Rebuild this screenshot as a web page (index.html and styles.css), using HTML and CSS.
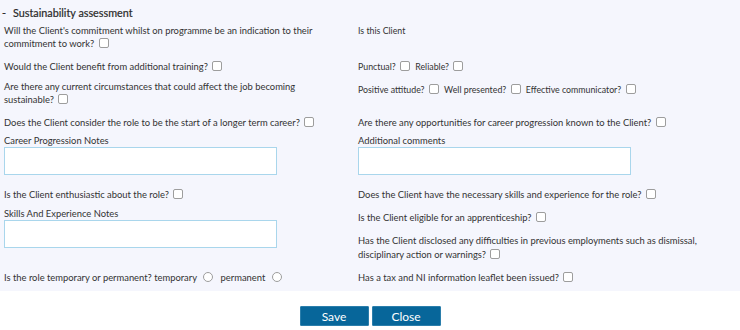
FILE: index.html
```html
<!DOCTYPE html>
<html lang="en">
<head>
  <meta charset="UTF-8">
  <title>Sustainability assessment</title>
  <link rel="stylesheet" href="styles.css">
</head>
<body>
  <div class="panel">
    <div class="legend"><span class="dash">-</span>Sustainability assessment</div>
    <div class="grid">
      <div class="cell">Will the Client's commitment whilst on programme be an indication to their commitment to work? <input type="checkbox"></div>
      <div class="cell small">Is this Client</div>

      <div class="cell">Would the Client benefit from additional training? <input type="checkbox"></div>
      <div class="cell small">Punctual? <input type="checkbox"> <span class="opt">Reliable?</span> <input type="checkbox"></div>

      <div class="cell">Are there any current circumstances that could affect the job becoming sustainable? <input type="checkbox"></div>
      <div class="cell small push">Positive attitude? <input type="checkbox"> <span class="opt">Well presented?</span> <input type="checkbox"> <span class="opt">Effective communicator?</span> <input type="checkbox"></div>

      <div class="cell">Does the Client consider the role to be the start of a longer term career? <input type="checkbox"></div>
      <div class="cell">Are there any opportunities for career progression known to the Client? <input type="checkbox"></div>

      <div class="cell">
        <label class="lbl">Career Progression Notes</label>
        <textarea></textarea>
      </div>
      <div class="cell">
        <label class="lbl">Additional comments</label>
        <textarea></textarea>
      </div>

      <div class="cell">Is the Client enthusiastic about the role? <input type="checkbox"></div>
      <div class="cell">Does the Client have the necessary skills and experience for the role? <input type="checkbox"></div>

      <div class="cell">
        <label class="lbl">Skills And Experience Notes</label>
        <textarea></textarea>
      </div>
      <div class="cell stack">
        <div>Is the Client eligible for an apprenticeship? <input type="checkbox"></div>
        <div>Has the Client disclosed any difficulties in previous employments such as dismissal, disciplinary action or warnings? <input type="checkbox"></div>
      </div>

      <div class="cell">Is the role temporary or permanent? temporary <input type="radio" name="role"> <span class="opt">permanent</span> <input type="radio" name="role"></div>
      <div class="cell">Has a tax and NI information leaflet been issued? <input type="checkbox"></div>
    </div>
  </div>
  <div class="actions">
    <button class="btn">Save</button>
    <button class="btn">Close</button>
  </div>
</body>
</html>
```

FILE: styles.css
```css
*{
  margin:0;
  padding:0;
  box-sizing:border-box;
}
body{
  font-family:Lato, "Open Sans", sans-serif;
  font-size:9.4px;
  color:#333;
  background:#fff;
}
.panel{
  background:#f5f6fd;
  padding:6px 0 0 0;
  height:291px;
}
.legend{
  font-size:10.8px;
  line-height:13px;
  color:#2a2a2a;
  -webkit-text-stroke:0.2px #2a2a2a;
  padding-left:2px;
}
.dash{
  margin-right:7px;
}
.grid{
  display:grid;
  grid-template-columns:354px 1fr;
  grid-template-rows:36px 20px 36px 18px 54px 19px 64px 20px;
  margin-top:5px;
  padding-left:4px;
}
.cell{
  line-height:13px;
  padding-right:12px;
}
.cell.small{
  font-size:8.8px;
}
.cell.push{
  padding-top:3px;
}
.opt{
  margin-left:3px;
}
.stack{
  display:flex;
  flex-direction:column;
  gap:9px;
  padding-top:4px;
  padding-right:4px;
  line-height:14px;
}
.lbl{
  display:block;
}
textarea{
  display:block;
  width:273px;
  height:28px;
  border:1px solid #a9d6ec;
  background:#fff;
  resize:none;
}
input[type=checkbox],input[type=radio]{
  appearance:none;
  -webkit-appearance:none;
  width:10px;
  height:10px;
  border:1px solid #9d9d9d;
  background:#fff;
  vertical-align:-1px;
  margin-left:2px;
}
input[type=checkbox]{
  border-radius:2px;
}
input[type=radio]{
  border-radius:50%;
  margin-left:4px;
  margin-right:2px;
}
.actions{
  display:flex;
  justify-content:center;
  gap:3px;
  margin-top:15px;
}
.btn{
  width:69px;
  height:20px;
  background:#07669a;
  color:#fff;
  border:1px solid #2b7eab;
  border-radius:1px;
  font-family:Lato, "Open Sans", sans-serif;
  font-size:12px;
}
```
